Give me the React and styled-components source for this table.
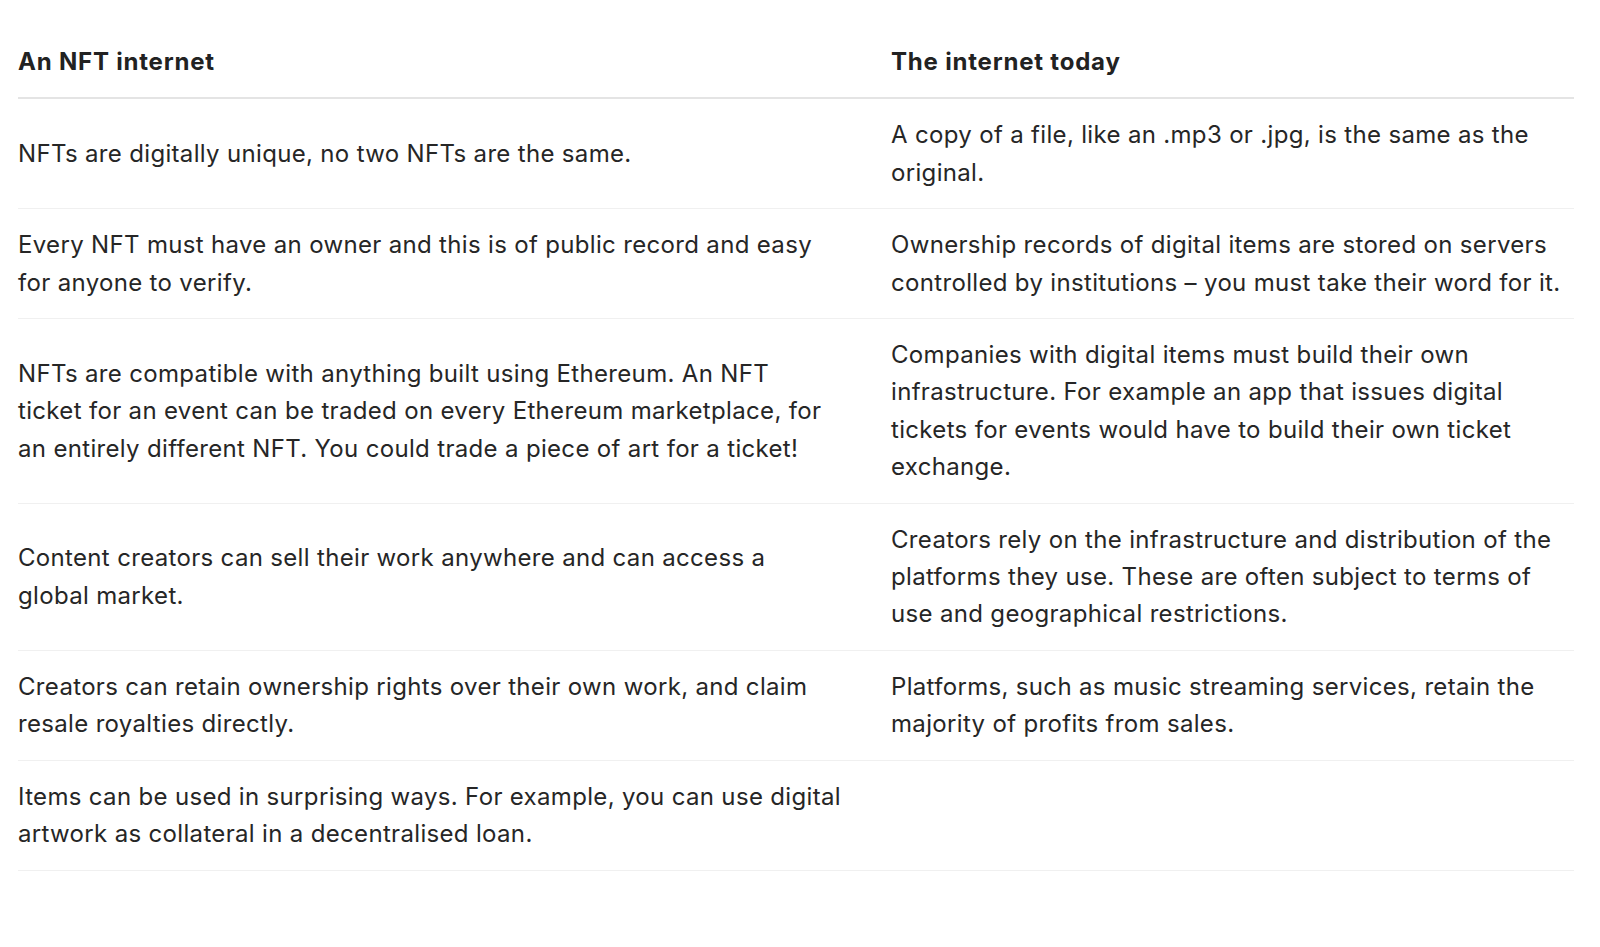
import React from 'react';
import styled, { createGlobalStyle } from 'styled-components';

const GlobalStyle = createGlobalStyle`
    body {
        margin: 0;
        background: #ffffff;
        font-family: Inter, "Noto Sans", sans-serif;
        color: #222222;
    }
`

const Page = styled.div`
    padding: 26px 26px 0 18px;
`

const Table = styled.div`
    display: flex;
    flex-direction: column;
`

const Row = styled.div`
    display: grid;
    grid-template-columns: 827px 1fr;
    column-gap: 46px;
    border-bottom: ${props => props.head ? '2px solid #e4e4e4' : '1px solid #f0f0f0'};
`

// pre-line so the few hand breaks in the copy match the source wrapping
const Cell = styled.div`
    align-self: center;
    padding: 17px 0;
    font-size: 24px;
    line-height: 37.4px;
    white-space: pre-line;
    font-weight: ${props => props.head ? 700 : 400};
    letter-spacing: ${props => props.head ? '0.8px' : '0.33px'};
    color: ${props => props.head ? '#222222' : '#262626'};
`

const rows = [
    [
        'NFTs are digitally unique, no two NFTs are the same.',
        'A copy of a file, like an .mp3 or .jpg, is the same as the original.',
    ],
    [
        'Every NFT must have an owner and this is of public record and easy for anyone to verify.',
        'Ownership records of digital items are stored on servers controlled by institutions – you must take their word for it.',
    ],
    [
        'NFTs are compatible with anything built using Ethereum. An NFT\nticket for an event can be traded on every Ethereum marketplace, for\nan entirely different NFT. You could trade a piece of art for a ticket!',
        'Companies with digital items must build their own infrastructure. For example an app that issues digital tickets for events would have to build their own ticket exchange.',
    ],
    [
        'Content creators can sell their work anywhere and can access a\nglobal market.',
        'Creators rely on the infrastructure and distribution of the platforms they use. These are often subject to terms of use and geographical restrictions.',
    ],
    [
        'Creators can retain ownership rights over their own work, and claim resale royalties directly.',
        'Platforms, such as music streaming services, retain the majority of profits from sales.',
    ],
    [
        'Items can be used in surprising ways. For example, you can use digital artwork as collateral in a decentralised loan.',
        '',
    ],
];

const App = () => {
    return (
        <Page>
            <GlobalStyle />
            <Table>
                <Row head>
                    <Cell head>An NFT internet</Cell>
                    <Cell head>The internet today</Cell>
                </Row>
                {rows.map((r, i) => (
                    <Row key={i}>
                        <Cell>{r[0]}</Cell>
                        <Cell>{r[1]}</Cell>
                    </Row>
                ))}
            </Table>
        </Page>
    );
}

export default App;
